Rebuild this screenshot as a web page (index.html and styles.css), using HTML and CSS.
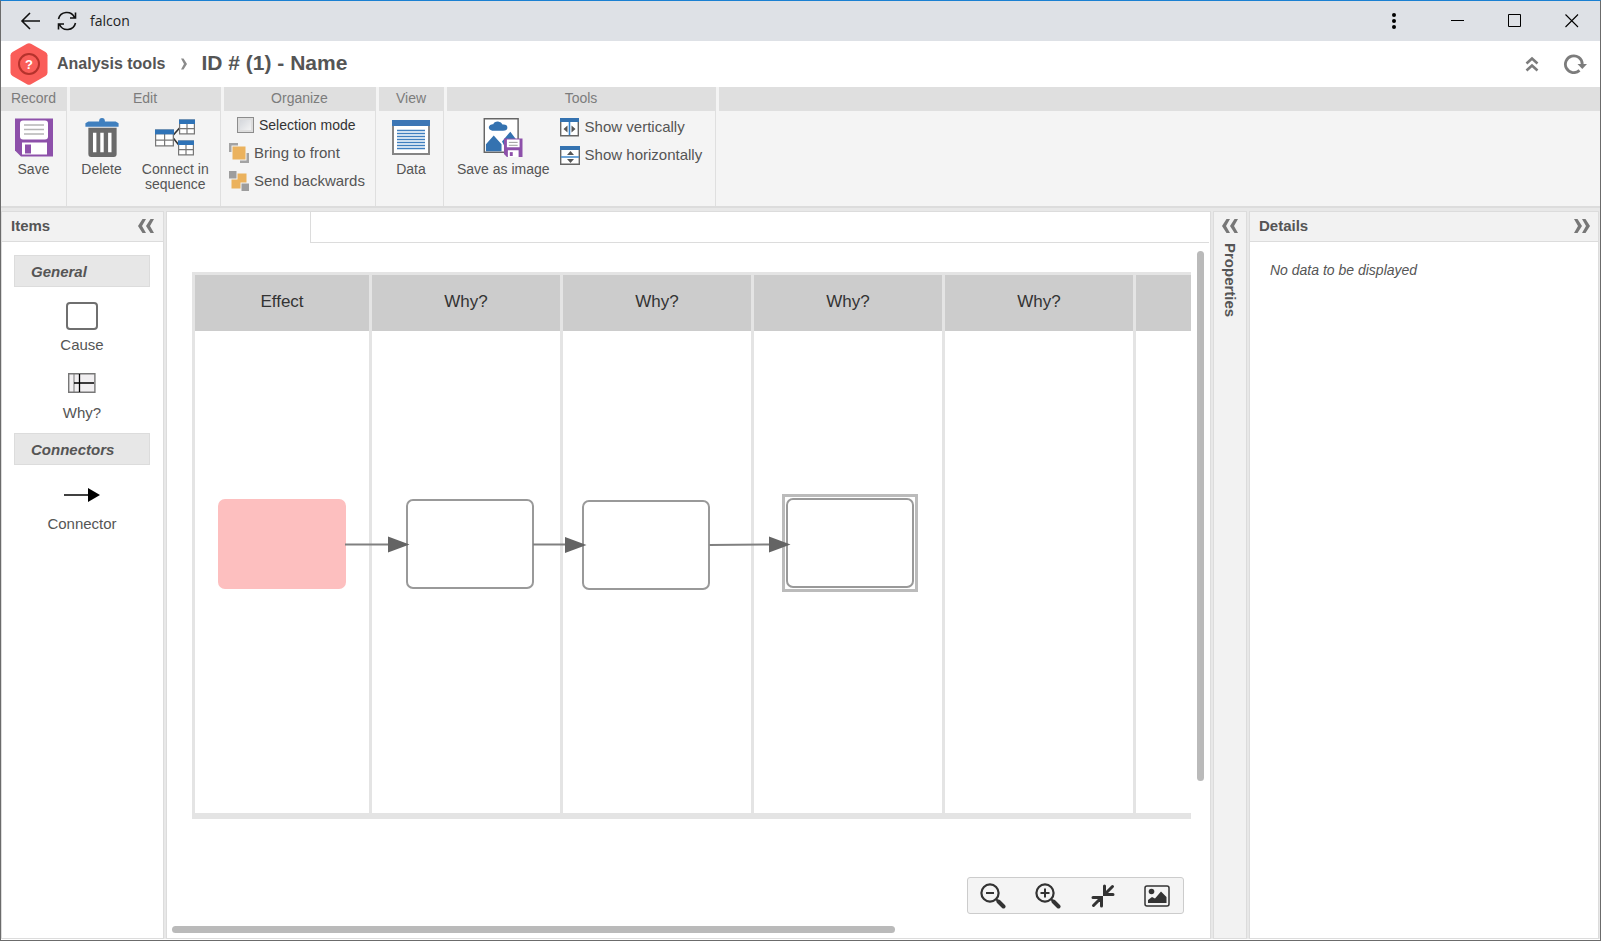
FILE: index.html
```html
<!DOCTYPE html>
<html lang="en">
<head>
<meta charset="utf-8">
<title>falcon</title>
<link rel="stylesheet" href="styles.css">
</head>
<body>
<div class="window">
  <header class="titlebar">
    <button class="icon-btn" aria-label="Back"><svg width="20" height="20" viewBox="0 0 20 20"><path d="M10 2L2 10l8 8M2 10h18" fill="none" stroke="#111" stroke-width="1.6"/></svg></button>
    <button class="icon-btn reload" aria-label="Reload"><svg width="20" height="20" viewBox="0 0 20 20"><path d="M1.500 8A8.500 8.500 0 0 1 17.500 6.500M18.500 12A8.500 8.500 0 0 1 2.500 13.500M18.500 1.500v5.500h-5.500M1.500 18.500v-5.500h5.500" fill="none" stroke="#111" stroke-width="1.600"/></svg></button>
    <span class="app-name">falcon</span>
    <div class="window-controls">
      <button class="icon-btn" aria-label="Menu"><svg width="14" height="18" viewBox="0 0 14 18"><g fill="#000"><circle cx="7" cy="3" r="2"/><circle cx="7" cy="9" r="2"/><circle cx="7" cy="15" r="2"/></g></svg></button>
      <button class="icon-btn" aria-label="Minimize"><svg width="14" height="14" viewBox="0 0 14 14"><path d="M0 6.500h13" stroke="#000"/></svg></button>
      <button class="icon-btn" aria-label="Maximize"><svg width="14" height="14" viewBox="0 0 14 14"><path d="M.5.500h12v12H.5z" fill="none" stroke="#000"/></svg></button>
      <button class="icon-btn" aria-label="Close"><svg width="14" height="14" viewBox="0 0 14 14"><path d="M.5.500l12.500 12.500M13 .5L.5 13" stroke="#000" stroke-width="1.100"/></svg></button>
    </div>
  </header>

  <div class="page-head">
    <svg class="logo" width="38" height="42" viewBox="0 0 38 42"><path d="M17 .7q2-1 4 0l14.500 8.300q2 1.200 2 3.300v17.400q0 2.100-2 3.300L21 41.300q-2 1-4 0L2.500 33q-2-1.200-2-3.300V12.300q0-2.100 2-3.300z" fill="#fa5d59"/><circle cx="19" cy="21" r="10" fill="none" stroke="#b5322c" stroke-width="2"/><text x="19" y="25.500" class="logo-mark">?</text></svg>
    <a class="crumb" href="#">Analysis tools</a>
    <svg width="8" height="12" viewBox="0 0 8 12"><path d="M1 .5h2.500L7 6l-3.500 5.500H1L4 6z" fill="#8b8b8b"/></svg>
    <h1 class="page-title">ID # (1) - Name</h1>
    <div class="head-actions">
      <button class="icon-btn" aria-label="Collapse ribbon"><svg width="14" height="16" viewBox="0 0 14 16"><path d="M1.500 7.500L7 2.500l5.500 5M1.500 14.500L7 9.500l5.500 5" fill="none" stroke="#7c7c7c" stroke-width="2.600"/></svg></button>
      <button class="icon-btn" aria-label="Refresh"><svg width="24" height="20" viewBox="0 0 24 20"><path d="M16.500 16.400A8.400 8.400 0 1 1 19.200 10" fill="none" stroke="#7c7c7c" stroke-width="2.800"/><path d="M14.500 10H24l-4.700 5z" fill="#7c7c7c"/></svg></button>
    </div>
  </div>

  <nav class="ribbon">
    <section class="group record">
      <h2 class="group-title">Record</h2>
      <div class="group-body">
        <button class="tool"><svg width="38" height="38" viewBox="0 0 38 38"><path d="M0 0h38v38H6l-6-6z" fill="#8d50aa"/><rect x="5" y="2" width="28" height="19" rx="3" fill="#fff"/><path d="M9 6.500h20M9 11h20M9 15.500h20" stroke="#b5b5b5" stroke-width="1.500"/><path d="M7 24h25v12H7z" fill="#fff"/><path d="M10 26h6v9h-6z" fill="#8d50aa"/></svg>Save</button>
      </div>
    </section>
    <section class="group edit">
      <h2 class="group-title">Edit</h2>
      <div class="group-body">
        <button class="tool"><svg width="34" height="40" viewBox="0 0 34 40"><path d="M0 9V5.500l3-2h11q0-3.500 3-3.500t3 3.500h11l3 2V9z" fill="#3f7fbe"/><path d="M3 10h29v27q0 3-3 3H6q-3 0-3-3z" fill="#6a6a6a"/><path d="M9.500 15v20M17 15v20M25 15v20" stroke="#fff" stroke-width="3.500"/></svg>Delete</button>
        <button class="tool"><svg width="40" height="38" viewBox="0 0 40 38"><path d="M17 18l8-9M17 18l8 10" stroke="#333" stroke-width="1.600"/><path d="M0 11h19v17H0z" fill="#777"/><path d="M0 11h19v5H0z" fill="#2f73b7"/><path d="M1.200 16H9v5H1.200zM10.200 16h7.500v5h-7.500zM1.200 22.200H9v4.600H1.200zM10.200 22.200h7.500v4.600h-7.500z" fill="#fff"/><path d="M24 1h16v15H24z" fill="#777"/><path d="M24 1h16v4.500H24z" fill="#2f73b7"/><path d="M25.200 5.500h6.200v4h-6.200zM32.600 5.500h6.200v4h-6.200zM25.200 10.700h6.200v4h-6.200zM32.600 10.700h6.200v4h-6.200z" fill="#fff"/><path d="M23 22h16v15H23z" fill="#777"/><path d="M23 22h16v4.500H23z" fill="#2f73b7"/><path d="M24.200 26.500h6.200v4h-6.200zM31.600 26.500h6.200v4h-6.200zM24.200 31.700h6.200v4h-6.200zM31.600 31.700h6.200v4h-6.200z" fill="#fff"/></svg>Connect in<br>sequence</button>
      </div>
    </section>
    <section class="group organize">
      <h2 class="group-title">Organize</h2>
      <div class="group-list">
        <label class="check"><input type="checkbox" class="checkbox">Selection mode</label>
        <button class="row-tool"><svg width="20" height="20" viewBox="0 0 20 20"><path d="M0 0h9v9H0zM11 10h9v10h-9z" fill="#a3a3a3"/><path d="M2.500 2.500h15v15h-15z" fill="#f4f4f4"/><path d="M3.500 3.500h13v13h-13z" fill="#ebb25d"/></svg>Bring to front</button>
        <button class="row-tool"><svg width="20" height="20" viewBox="0 0 20 20"><path d="M2.500 2.500h15v15h-15z" fill="#ebb25d"/><path d="M0 0h8.500v8.500H0zM11.500 11.500H20V20h-8.500z" fill="#f4f4f4"/><path d="M0 0h7.500v7.500H0zM12.500 12.500H20V20h-7.500z" fill="#9d9d9d"/></svg>Send backwards</button>
      </div>
    </section>
    <section class="group view">
      <h2 class="group-title">View</h2>
      <div class="group-body">
        <button class="tool"><svg width="38" height="35" viewBox="0 0 38 35"><path d="M1 1h36v33H1z" fill="#fff" stroke="#858585" stroke-width="2"/><path d="M0 0h38v6H0z" fill="#3c76b5"/><path d="M5 10.500h28M5 13.500h28M5 16.500h28M5 19.500h28M5 22.500h28M5 25.500h28M5 28.500h28" stroke="#3f7fbf" stroke-width="1.400"/></svg>Data</button>
      </div>
    </section>
    <section class="group tools">
      <h2 class="group-title">Tools</h2>
      <div class="tools-body">
        <button class="tool"><svg width="40" height="40" viewBox="0 0 40 40"><path d="M.8.800h34.700v34.400H.8z" fill="#fff" stroke="#666" stroke-width="1.500"/><path d="M9 13q-4-1-3.500-4Q6.500 6 10 6.500 11 3.500 15 3.700q3.500.3 4.500 3 5-.5 5 3.300Q24.500 13 20 13z" fill="#3472b0"/><path d="M2.500 34v-7l8-9 8 9v7zM19 24l8.500-10 6 8v8H22z" fill="#3472b0"/><path d="M21 21h19v19H24l-3-3z" fill="#8d50aa"/><path d="M24 22h13v8H24zM25 33h11v7H25z" fill="#fff"/><path d="M26 25h9M26 28h9" stroke="#999"/><path d="M27 35h3v4h-3z" fill="#8d50aa"/></svg>Save as image</button>
        <div class="group-list">
          <button class="row-tool"><svg width="20" height="19" viewBox="0 0 20 19"><path d="M.7.700h17.600v17H.7z" fill="#fff" stroke="#666" stroke-width="1.400"/><path d="M0 0h19v4H0z" fill="#3472b0"/><path d="M9.500 4v13" stroke="#2f80cc" stroke-width="1.600"/><path d="M7.500 7.500v7L3.500 11zM11.500 7.500v7l4-3.500z" fill="#555"/></svg>Show vertically</button>
          <button class="row-tool"><svg width="20" height="19" viewBox="0 0 20 19"><path d="M.7.700h18.600v17.600H.7z" fill="#fff" stroke="#666" stroke-width="1.400"/><path d="M0 0h20v4H0z" fill="#3472b0"/><path d="M1 11h18" stroke="#4e91d0" stroke-width="1.600"/><path d="M7 9h7l-3.500-4zM7 13h7l-3.500 4z" fill="#555"/></svg>Show horizontally</button>
        </div>
      </div>
    </section>
    <section class="group rest"><div class="group-title"></div></section>
  </nav>

  <main class="workspace">
    <aside class="panel items">
      <div class="panel-head"><h2 class="panel-title">Items</h2>
        <button class="icon-btn" aria-label="Collapse items"><svg width="16" height="14" viewBox="0 0 16 14"><path d="M4.500 0H8L4 7l4 7H4.500L0 7zM12.500 0H16l-4 7 4 7h-3.500L8 7z" fill="#777"/></svg></button></div>
      <div class="palette">
        <h3 class="palette-title">General</h3>
        <button class="palette-item cause"><svg width="32" height="28" viewBox="0 0 32 28"><rect x="1" y="1" width="30" height="26" rx="3" fill="#fff" stroke="#6f6f6f" stroke-width="2"/></svg>Cause</button>
        <button class="palette-item why"><svg width="28" height="20" viewBox="0 0 28 20"><path d="M.7.700h26.200v18.600H.7z" fill="#f1eff1" stroke="#777" stroke-width="1.400"/><path d="M6 1v18" stroke="#777"/><path d="M11.500 1v18M6 10h20" stroke="#000" stroke-width="1.300"/></svg>Why?</button>
        <h3 class="palette-title">Connectors</h3>
        <button class="palette-item connector"><svg width="36" height="14" viewBox="0 0 36 14"><path d="M0 7h26" stroke="#000" stroke-width="1.500"/><path d="M24 0l12 7-12 7z"/></svg>Connector</button>
      </div>
    </aside>

    <section class="panel board">
      <div class="tabs"><div class="tab"></div><div class="tab-rest"></div></div>
      <div class="board-body">
        <div class="viewport">
          <div class="diagram">
            <div class="lane effect"><div class="lane-title">Effect</div></div>
            <div class="lane"><div class="lane-title">Why?</div></div>
            <div class="lane"><div class="lane-title">Why?</div></div>
            <div class="lane"><div class="lane-title">Why?</div></div>
            <div class="lane"><div class="lane-title">Why?</div></div>
            <div class="lane"><div class="lane-title"></div></div>
            <div class="node start"></div>
            <div class="node n1"></div>
            <div class="node n2"></div>
            <div class="node n3"></div>
            <svg class="links" width="720" height="300" viewBox="0 0 720 300"><path d="M153 272.500h44M341 272.500h36M517.500 273l60-.5" stroke="#808080" stroke-width="2"/><path d="M196 264.500l21.500 8-21.500 8zM373 265l21.500 8-21.500 8zM577 264.500l21.500 8-21.500 8z" fill="#646464"/></svg>
          </div>
        </div>
        <div class="vtrack"><div class="vthumb"></div></div>
        <div class="zoombar">
          <button class="icon-btn" aria-label="Zoom out"><svg width="26" height="26" viewBox="0 0 26 26"><g fill="none" stroke="#333"><circle cx="10" cy="10" r="8.600" stroke-width="2.200"/><path d="M6 10h8" stroke-width="2"/><path d="M16 16l2.500 2.500" stroke-width="2"/><path d="M18.500 18.500l5 5" stroke-width="4" stroke-linecap="round"/></g></svg></button>
          <button class="icon-btn" aria-label="Zoom in"><svg width="26" height="26" viewBox="0 0 26 26"><g fill="none" stroke="#333"><circle cx="10" cy="10" r="8.600" stroke-width="2.200"/><path d="M5.500 10h9M10 5.500v9" stroke-width="2"/><path d="M16 16l2.500 2.500" stroke-width="2"/><path d="M18.500 18.500l5 5" stroke-width="4" stroke-linecap="round"/></g></svg></button>
          <button class="icon-btn" aria-label="Fit"><svg width="24" height="24" viewBox="0 0 24 24"><path d="M21.500 2.500l-7 7M13.500 2v8.500H22M2.500 21.500l7-7M2 13.500h8.500V22" fill="none" stroke="#333" stroke-width="3" stroke-linecap="round"/></svg></button>
          <button class="icon-btn" aria-label="Overview"><svg width="26" height="22" viewBox="0 0 26 22"><rect x="1" y="1" width="24" height="20" rx="2" fill="#f4f4f4" stroke="#333" stroke-width="1.500"/><circle cx="7.500" cy="6.500" r="2.800" fill="#333"/><path d="M4 18v-3l4-3 3 1.500 6-7 5.500 5.500V18z" fill="#333"/></svg></button>
        </div>
      </div>
      <div class="htrack"><div class="hthumb"></div></div>
    </section>

    <aside class="panel properties">
      <button class="icon-btn" aria-label="Expand properties"><svg width="16" height="14" viewBox="0 0 16 14"><path d="M4.500 0H8L4 7l4 7H4.500L0 7zM12.500 0H16l-4 7 4 7h-3.500L8 7z" fill="#777"/></svg></button>
      <h2 class="vertical-title">Properties</h2>
    </aside>

    <aside class="panel details">
      <div class="panel-head"><h2 class="panel-title">Details</h2>
        <button class="icon-btn" aria-label="Collapse details"><svg width="16" height="14" viewBox="0 0 16 14"><path d="M11.500 0H8l4 7-4 7h3.500L16 7zM3.500 0H0l4 7-4 7h3.500L8 7z" fill="#777"/></svg></button></div>
      <p class="empty">No data to be displayed</p>
    </aside>
  </main>
</div>
</body>
</html>
```
FILE: styles.css
```css
* { box-sizing: border-box; }
body { margin: 0; font-family: "Liberation Sans", Arial, sans-serif; font-size: 14px; line-height: 15px; color: #555; }
h1, h2, h3, p { margin: 0; font-size: inherit; }
button { margin: 0; padding: 0; border: 0; background: none; font: inherit; color: inherit; }
svg { display: block; flex: none; }
.icon-btn { display: flex; flex: none; }

.window { height: 100vh; display: flex; flex-direction: column; border: 1px solid #6b6b6b; border-top-color: #1a80d2; background: #fff; }

.titlebar { flex: none; height: 40px; display: flex; align-items: center; padding: 0 21px 0 19px; background: #dee1e6; }
.reload { margin-left: 17px; }
.app-name { margin-left: 13px; font: 14px/20px "Open Sans", "Noto Sans", sans-serif; color: #222; }
.window-controls { margin-left: auto; display: flex; align-items: center; gap: 43px; }
.window-controls .icon-btn:first-child { margin-right: 7px; }

.page-head { flex: none; height: 46px; display: flex; align-items: center; padding: 0 13px 0 9px; }
.logo-mark { font-size: 13px; font-weight: bold; fill: #fff; text-anchor: middle; }
.crumb { margin: 0 15px 0 9px; font-size: 16px; line-height: 20px; font-weight: bold; color: #555; text-decoration: none; }
.page-title { margin-left: 13px; padding-bottom: 2px; font-size: 21px; line-height: 24px; font-weight: bold; color: #555; }
.head-actions { margin-left: auto; display: flex; align-items: center; gap: 24px; }

.ribbon { flex: none; height: 121px; display: flex; gap: 3px; background: #f4f4f4; border-bottom: 2px solid #dcdcdc; }
.group { display: flex; flex-direction: column; border-right: 1px solid #dfdfdf; }
.group-title { height: 24px; background: #dfdfdf; font-weight: normal; line-height: 23px; text-align: center; color: #7c7c7c; }
.record { width: 66px; }
.edit { width: 151px; }
.organize { width: 152px; }
.view { width: 65px; }
.tools { width: 269px; }
.rest { flex: 1; border: 0; }
.group-body { display: flex; justify-content: center; align-items: flex-start; gap: 20px; padding-top: 6px; }
.tool { display: flex; flex-direction: column; align-items: center; gap: 5px; padding: 1px 0 0; }
.tool svg { height: 39px; }
.tools-body { display: flex; align-items: flex-start; padding: 6px 0 0 10px; gap: 10px; }
.group-list { display: flex; flex-direction: column; gap: 8px; padding: 4px 0 0 5px; }
.tools-body .group-list { padding: 0; }
.check { display: flex; align-items: center; gap: 5px; height: 20px; padding-left: 8px; color: #333; }
.checkbox { appearance: none; margin: 0; width: 17px; height: 16px; border: 1px solid #8c8c8c; background: linear-gradient(135deg, #cfd2d8, #f8f8f8); box-shadow: inset 0 0 0 2px #ddd; }
.row-tool { display: flex; align-items: center; gap: 5px; height: 20px; font-size: 15px; line-height: 18px; }

.workspace { flex: 1; min-height: 0; display: grid; grid-template-columns: 163px minmax(0, 1fr) 34px 350px; column-gap: 2px; padding: 3px 1px 0 0; background: #e8e8e8; border-bottom: 1px solid #fff; }
.panel { border: 1px solid #dcdcdc; background: #fff; min-height: 0; min-width: 0; }
.panel-head { display: flex; align-items: center; justify-content: space-between; height: 30px; padding: 0 8px 1px 9px; background: #f2f2f2; border-bottom: 1px solid #dcdcdc; }
.items .panel-head { padding-right: 9px; }
.panel-title { font-size: 15px; line-height: 18px; }

.palette { padding: 13px 13px 13px 12px; display: flex; flex-direction: column; align-items: stretch; }
.palette-title { height: 32px; padding-left: 16px; border: 1px solid #dcdcdc; background: #e7e7e7; font-size: 15px; line-height: 32px; font-style: italic; }
.palette-item { display: flex; flex-direction: column; align-items: center; font-size: 15px; line-height: 18px; }
.cause { gap: 6px; padding-top: 15px; }
.why { gap: 11px; padding: 19px 0 11px; }
.connector { gap: 13px; padding-top: 23px; }

.board { display: flex; flex-direction: column; }
.tabs { display: flex; height: 31px; padding-right: 1px; }
.tab { width: 143px; }
.tab-rest { flex: 1; border: 1px solid #dcdcdc; border-width: 0 0 1px 1px; }
.board-body { position: relative; flex: 1; min-height: 0; display: flex; gap: 6px; padding: 8px 6px 0 25px; }
.viewport { flex: 1; min-width: 0; overflow: hidden; padding-top: 21px; }
.diagram { position: relative; display: flex; width: 1132px; height: 547px; border-top: 3px solid #e4e4e4; border-bottom: 6px solid #e4e4e4; }
.lane { width: 191px; flex: none; border-left: 3px solid #e4e4e4; }
.effect { width: 177px; }
.lane-title { height: 56px; background: #ccc; font-size: 17px; line-height: 54px; text-align: center; color: #333; }
.node { position: absolute; width: 128px; height: 90px; border: 2px solid #999; border-radius: 7px; background: #fff; }
.start { left: 26px; top: 224px; border: 0; background: #fdbfbf; }
.n1 { left: 214px; top: 224px; }
.n2 { left: 390px; top: 225px; }
.n3 { left: 594px; top: 223px; }
.n3::before { content: ""; position: absolute; inset: -6px; border: 3px solid #bbb; }
.links { position: absolute; left: 0; top: -3px; }
.vtrack { width: 7px; flex: none; }
.vthumb { width: 7px; height: 79%; border-radius: 4px; background: #bababa; }
.htrack { height: 16px; padding: 4px 5px 5px; }
.hthumb { width: 70%; height: 7px; border-radius: 4px; background: #bababa; }
.zoombar { position: absolute; right: 26px; bottom: 8px; width: 217px; height: 37px; display: flex; align-items: center; justify-content: space-between; padding: 0 13px 0 12px; border: 1px solid #ccc; border-radius: 3px; background: #f4f4f4; }

.properties { display: flex; flex-direction: column; align-items: center; gap: 10px; padding-top: 7px; background: #f2f2f2; }
.vertical-title { writing-mode: vertical-rl; font-size: 15px; line-height: 16px; }
.empty { padding: 19px 20px; font-style: italic; line-height: 18px; }
```
